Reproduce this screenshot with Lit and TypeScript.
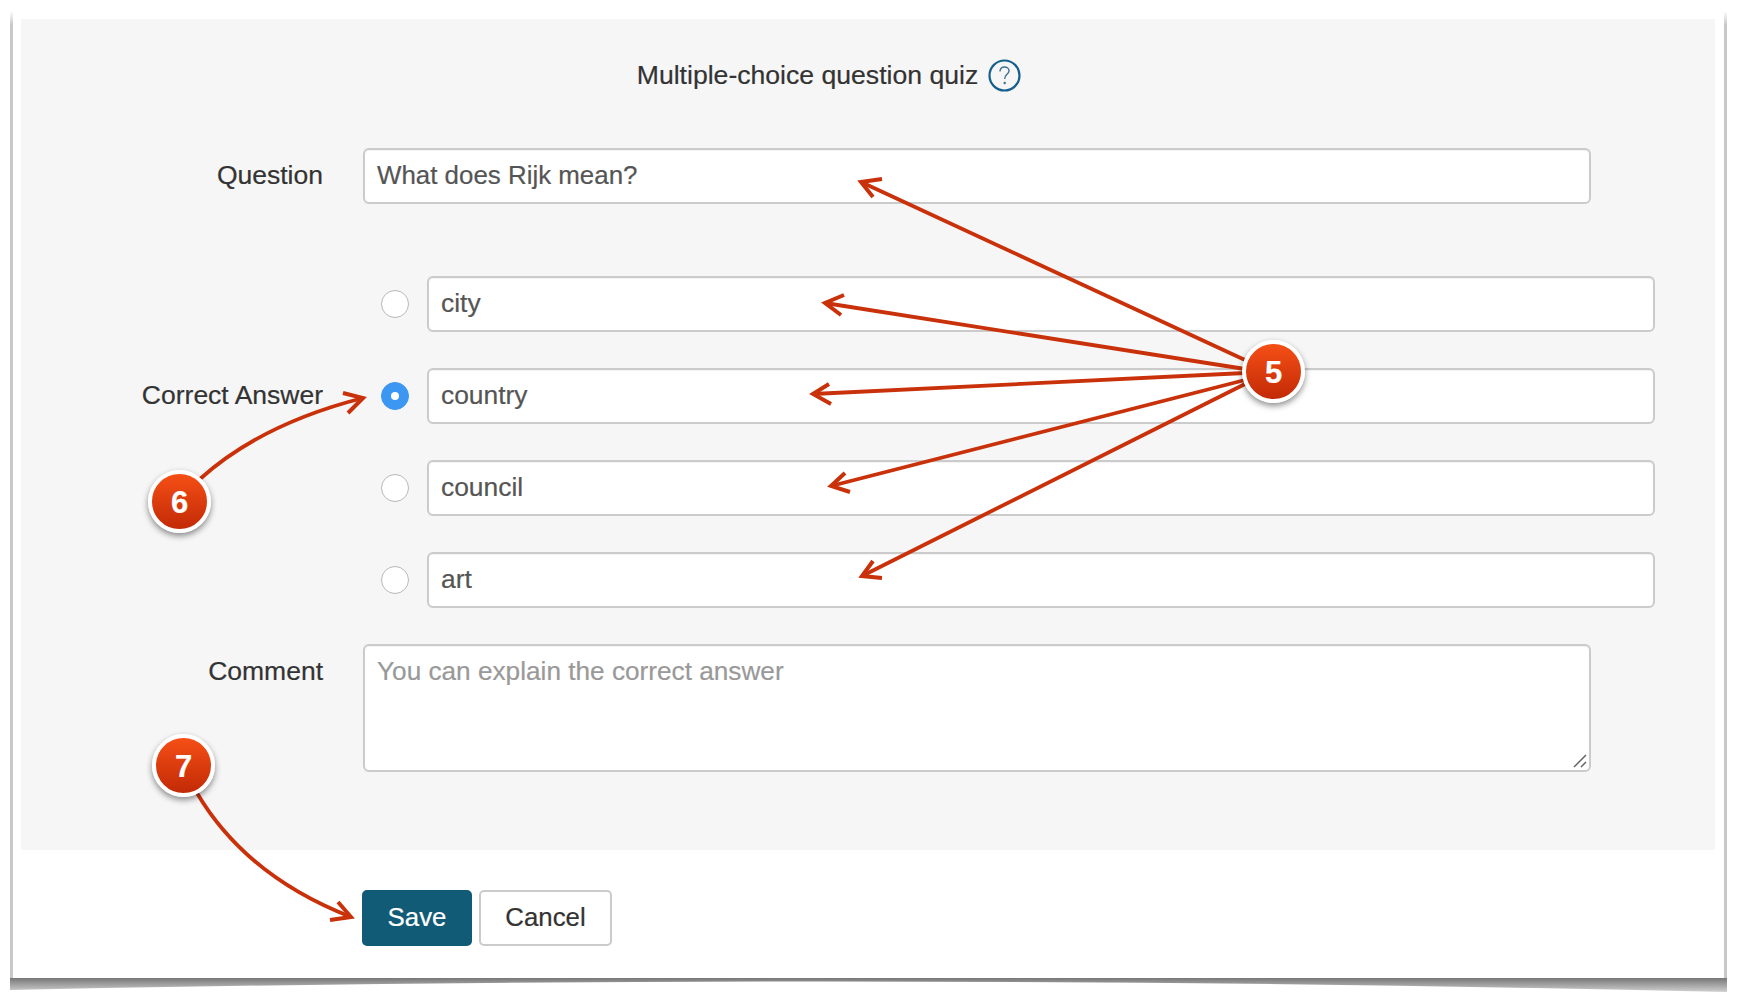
import { LitElement, html, css, svg } from "lit";
import { customElement } from "lit/decorators.js";

interface Arrow { d: string; head: string; }

const ARROWS: Arrow[] = [
  { d: "M1245 360 L861 182", head: "M882 179 L861 182 L873 197" },
  { d: "M1245 369 L825 303", head: "M844 295 L825 303 L841 315" },
  { d: "M1245 373 L813 394", head: "M829 384 L813 394 L831 404" },
  { d: "M1245 380 L831 486", head: "M845 473 L831 486 L850 492" },
  { d: "M1245 384 L862 576", head: "M873 561 L862 576 L882 578" },
  { d: "M200 479 Q261 424 363 398", head: "M343 393 L363 398 L348 413" },
  { d: "M197 793 Q246 876 351 917", head: "M338 902 L351 917 L330 920" },
];

const BADGES = [
  { n: "5", cls: "b5" },
  { n: "6", cls: "b6" },
  { n: "7", cls: "b7" },
];

const ANSWERS = [
  { text: "city", checked: false, label: "" },
  { text: "country", checked: true, label: "Correct Answer" },
  { text: "council", checked: false, label: "" },
  { text: "art", checked: false, label: "" },
];

@customElement("app-root")
export class AppRoot extends LitElement {
  static styles = css`
    :host {
      display: block;
      position: relative;
      width: 1738px;
      height: 1004px;
      overflow: hidden;
      background: #fff;
      font-family: "Liberation Sans", Arial, sans-serif;
      font-size: 26px;
      color: #333;
      -webkit-text-stroke: 0.2px;
    }
    .paper {
      position: relative;
      box-sizing: border-box;
      width: 1717px;
      height: 966px;
      margin: 12px 0 0 10px;
      padding: 7px 9px 0 8px;
      border-left: 3px solid #c8c8c8;
      border-right: 3px solid #c8c8c8;
      border-image: linear-gradient(to bottom, #ffffff, #c8c8c8 14px) 1;
      border-top: 0;
      border-bottom: 0;
    }
    .panel {
      background: #f6f6f6;
      height: 831px;
      box-sizing: border-box;
      padding-top: 40px;
    }
    .title {
      display: flex;
      justify-content: center;
      align-items: center;
      gap: 10px;
      height: 32px;
      margin-bottom: 57px;
      padding-right: 78px;
      font-size: 26.6px;
      line-height: 32px;
    }
    .help { display: block; width: 33px; height: 33px; }
    .row {
      display: flex;
      align-items: center;
      height: 56px;
    }
    .row + .row { margin-top: 36px; }
    .row.question { margin-bottom: 72px; }
    .label {
      flex: 0 0 auto;
      box-sizing: border-box;
      width: 302px;
      margin-right: 40px;
      padding-bottom: 2px;
      text-align: right;
      white-space: nowrap;
      font-size: 26.5px;
    }
    .field {
      box-sizing: border-box;
      flex: 0 0 auto;
      width: 1228px;
      height: 56px;
      padding: 0 12px;
      line-height: 50px;
      background: #fff;
      border: 2px solid #cbcbcb;
      border-radius: 6px;
      box-shadow: inset 0 1px 1px rgba(0, 0, 0, 0.05);
      color: #555;
      font-size: 26.4px;
    }
    .row.question .field { font-size: 25.9px; }
    .radio {
      box-sizing: border-box;
      flex: 0 0 auto;
      display: flex;
      align-items: center;
      justify-content: center;
      width: 28px;
      height: 28px;
      margin: 0 18px;
      background: #fff;
      border: 1.5px solid #b8b8b8;
      border-radius: 50%;
    }
    .radio.on { background: #3c97f2; border-color: #3c97f2; }
    .radio.on::after {
      content: "";
      width: 8px;
      height: 8px;
      border-radius: 50%;
      background: #fff;
    }
    .row.comment { height: 128px; margin-top: 36px; align-items: flex-start; }
    .row.comment .label { line-height: 50px; padding: 2px 0 0; }
    .row.comment .field { height: 128px; position: relative; color: #999; font-size: 26.2px; }
    .grip { position: absolute; right: 1px; bottom: 1px; width: 16px; height: 16px; }
    .actions {
      display: flex;
      gap: 7px;
      margin: 40px 0 0 341px;
    }
    .btn {
      box-sizing: border-box;
      height: 56px;
      line-height: 50px;
      text-align: center;
      border-radius: 5px;
      border: 2px solid #cbcbcb;
      background: #fff;
      color: #333;
      font-size: 25.8px;
    }
    .btn.save {
      width: 110px;
      background: #115b76;
      border-color: #115b76;
      color: #fff;
    }
    .btn.cancel { width: 133px; }
    .curl {
      position: absolute;
      left: -3px;
      top: 966px;
      width: 1717px;
      height: 20px;
      overflow: visible;
    }
    .overlay {
      position: absolute;
      left: 0;
      top: 0;
      width: 1738px;
      height: 1004px;
      pointer-events: none;
    }
    .overlay svg { position: absolute; left: 0; top: 0; }
    .badge {
      position: absolute;
      box-sizing: border-box;
      width: 63px;
      height: 63px;
      border: 4px solid #fff;
      border-radius: 50%;
      background: linear-gradient(to bottom, #f54f16, #c22a06);
      box-shadow: 0 3px 6px rgba(0, 0, 0, 0.45);
      color: #fff;
      font-weight: 700;
      font-size: 31px;
      line-height: 57px;
      text-align: center;
    }
    .b5 { left: 1242px; top: 340px; }
    .b6 { left: 148px; top: 470px; }
    .b7 { left: 152px; top: 734px; }
  `;

  render() {
    return html`
      <div class="paper">
        <div class="panel">
          <div class="title">
            <span>Multiple-choice question quiz</span>
            <svg class="help" viewBox="0 0 33 33">
              <circle cx="16.5" cy="16.5" r="15" fill="none" stroke="#155f8c" stroke-width="2.2"></circle>
              <path d="M12 12.5 C12 9.5 14 8 16.5 8 C19 8 21 9.7 21 12 C21 15 16.7 15.5 16.7 20" fill="none" stroke="#3f6f8f" stroke-width="1.4"></path>
              <circle cx="16.7" cy="24" r="1.2" fill="#3f6f8f"></circle>
            </svg>
          </div>
          <div class="row question">
            <div class="label">Question</div>
            <div class="field">What does Rijk mean?</div>
          </div>
          ${ANSWERS.map(
            (a) => html`
              <div class="row">
                <div class="label">${a.label}</div>
                <div class="radio ${a.checked ? "on" : ""}"></div>
                <div class="field">${a.text}</div>
              </div>
            `
          )}
          <div class="row comment">
            <div class="label">Comment</div>
            <div class="field">
              You can explain the correct answer
              <svg class="grip" viewBox="0 0 16 16">
                <path d="M2 14 L14 2 M9 14 L14 9" stroke="#666" stroke-width="1.5" fill="none"></path>
              </svg>
            </div>
          </div>
        </div>
        <div class="actions">
          <div class="btn save">Save</div>
          <div class="btn cancel">Cancel</div>
        </div>
        <svg class="curl" viewBox="0 0 1717 20" preserveAspectRatio="none">
          <defs>
            <linearGradient id="curlFill" x1="0" y1="0" x2="0" y2="1">
              <stop offset="0" stop-color="#777"></stop>
              <stop offset="1" stop-color="#d0d0d0"></stop>
            </linearGradient>
            <filter id="curlBlur"><feGaussianBlur stdDeviation="0.7"></feGaussianBlur></filter>
          </defs>
          <path d="M0 0 L1717 0 L1717 14 Q860 -6 0 12 Z" fill="url(#curlFill)" filter="url(#curlBlur)"></path>
        </svg>
      </div>
      <div class="overlay">
        <svg width="1738" height="1004" viewBox="0 0 1738 1004" fill="none" stroke="#c9310a" stroke-width="3.8">
          ${ARROWS.map(
            (a) => svg`
              <path d=${a.d}></path>
              <path d=${a.head} stroke-width="4"></path>
            `
          )}
        </svg>
        ${BADGES.map((b) => html`<div class="badge ${b.cls}">${b.n}</div>`)}
      </div>
    `;
  }
}
